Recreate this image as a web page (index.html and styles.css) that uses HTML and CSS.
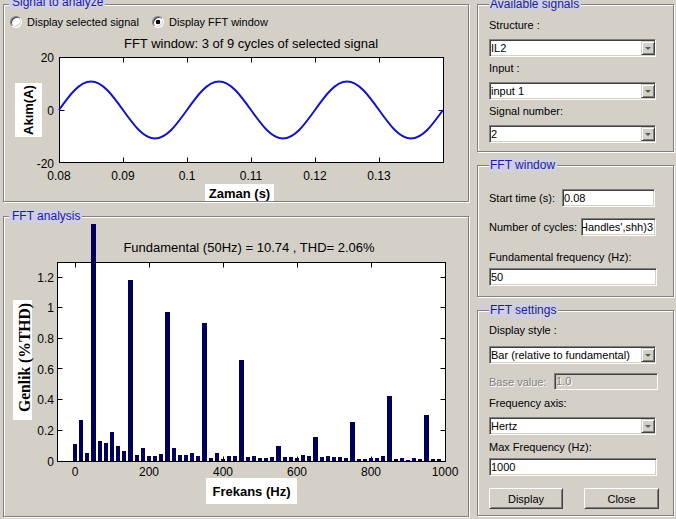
FILE: index.html
```html
<!DOCTYPE html>
<html>
<head>
<meta charset="utf-8">
<title>FFT Analysis</title>
<link rel="stylesheet" href="styles.css">
</head>
<body>
<div class="app">
  <div class="col left">
    <section class="panel p-signal">
      <div class="ptitle ptitle-top">Signal to analyze</div>
      <div class="radios">
        <label class="radio r-first"><span class="rb"></span>Display selected signal</label>
        <label class="radio"><span class="rb on"></span>Display FFT window</label>
      </div>
      <svg class="plot" width="464" height="172" viewBox="4 29 464 172">
        <text class="ttl" x="251" y="48" text-anchor="middle">FFT window: 3 of 9 cycles of selected signal</text>
        <rect x="59.5" y="57.5" width="384" height="105" fill="#fff" stroke="#000"/>
        <path class="ticks" d="M59.5 162.5v-5M123.5 162.5v-5M187.5 162.5v-5M251.5 162.5v-5M315.5 162.5v-5M379.5 162.5v-5M443.5 162.5v-5M59.5 57.5v5M123.5 57.5v5M187.5 57.5v5M251.5 57.5v5M315.5 57.5v5M379.5 57.5v5M443.5 57.5v5M59.5 57.5h5M59.5 110.5h5M59.5 162.5h5M443.5 57.5h-5M443.5 110.5h-5M443.5 162.5h-5"/>
        <path class="sine" d="M59 110c10.44 -14.6 20.42 -28.5 32 -28.5s21.56 13.9 32 28.5s20.42 28.5 32 28.5s21.56 -13.9 32 -28.5s20.42 -28.5 32 -28.5s21.56 13.9 32 28.5s20.42 28.5 32 28.5s21.56 -13.9 32 -28.5s20.42 -28.5 32 -28.5s21.56 13.9 32 28.5s20.42 28.5 32 28.5s21.56 -13.9 32 -28.5"/>
        <g class="tk" text-anchor="middle">
          <text x="59" y="180">0.08</text>
          <text x="123" y="180">0.09</text>
          <text x="187" y="180">0.1</text>
          <text x="251" y="180">0.11</text>
          <text x="315" y="180">0.12</text>
          <text x="379" y="180">0.13</text>
        </g>
        <g class="tk" text-anchor="end">
          <text x="54" y="61.5">20</text>
          <text x="54" y="114.5">0</text>
          <text x="54" y="167.5">-20</text>
        </g>
        <rect x="205" y="184" width="69" height="18" fill="#fff"/>
        <text class="axl" x="239.5" y="198" text-anchor="middle">Zaman (s)</text>
        <rect x="15" y="83" width="27" height="54" fill="#fff"/>
        <text class="axl" transform="translate(33 110) rotate(-90)" text-anchor="middle">Akım(A)</text>
      </svg>
    </section>
    <section class="panel p-analysis">
      <div class="ptitle">FFT analysis</div>
      <svg class="plot" width="464" height="293" viewBox="4 223 464 293">
        <text class="ttl" x="249" y="252" text-anchor="middle">Fundamental (50Hz) = 10.74 , THD= 2.06%</text>
        <rect x="57.5" y="262.5" width="388" height="199" fill="#fff" stroke="#000"/>
        <path class="ticks" d="M75.5 461.5v-5M149.5 461.5v-5M223.5 461.5v-5M297.5 461.5v-5M371.5 461.5v-5M445.5 461.5v-5M75.5 262.5v5M149.5 262.5v5M223.5 262.5v5M297.5 262.5v5M371.5 262.5v5M57.5 461.5h5M57.5 430.5h5M57.5 399.5h5M57.5 368.5h5M57.5 338.5h5M57.5 307.5h5M57.5 277.5h5M445.5 430.5h-5M445.5 399.5h-5M445.5 368.5h-5M445.5 338.5h-5M445.5 307.5h-5M445.5 277.5h-5"/>
        <g class="bars" transform="translate(75 461) scale(6.1667 -153.5)">
          <rect x="-0.325" width="0.65" height="0.11"/>
          <rect x="0.675" width="0.65" height="0.27"/>
          <rect x="1.675" width="0.65" height="0.05"/>
          <rect x="2.675" width="0.65" height="1.544"/>
          <rect x="3.675" width="0.65" height="0.13"/>
          <rect x="4.675" width="0.65" height="0.12"/>
          <rect x="5.675" width="0.65" height="0.19"/>
          <rect x="6.675" width="0.65" height="0.095"/>
          <rect x="7.675" width="0.65" height="0.065"/>
          <rect x="8.675" width="0.65" height="1.18"/>
          <rect x="9.675" width="0.65" height="0.04"/>
          <rect x="10.675" width="0.65" height="0.085"/>
          <rect x="11.675" width="0.65" height="0.035"/>
          <rect x="12.675" width="0.65" height="0.035"/>
          <rect x="13.675" width="0.65" height="0.045"/>
          <rect x="14.675" width="0.65" height="0.97"/>
          <rect x="15.675" width="0.65" height="0.085"/>
          <rect x="16.675" width="0.65" height="0.04"/>
          <rect x="17.675" width="0.65" height="0.04"/>
          <rect x="18.675" width="0.65" height="0.05"/>
          <rect x="19.675" width="0.65" height="0.03"/>
          <rect x="20.675" width="0.65" height="0.90"/>
          <rect x="21.675" width="0.65" height="0.02"/>
          <rect x="22.675" width="0.65" height="0.05"/>
          <rect x="23.675" width="0.65" height="0.015"/>
          <rect x="24.675" width="0.65" height="0.03"/>
          <rect x="25.675" width="0.65" height="0.035"/>
          <rect x="26.675" width="0.65" height="0.66"/>
          <rect x="27.675" width="0.65" height="0.025"/>
          <rect x="28.675" width="0.65" height="0.03"/>
          <rect x="29.675" width="0.65" height="0.02"/>
          <rect x="30.675" width="0.65" height="0.02"/>
          <rect x="31.675" width="0.65" height="0.025"/>
          <rect x="32.675" width="0.65" height="0.10"/>
          <rect x="33.675" width="0.65" height="0.025"/>
          <rect x="34.675" width="0.65" height="0.025"/>
          <rect x="35.675" width="0.65" height="0.02"/>
          <rect x="36.675" width="0.65" height="0.04"/>
          <rect x="37.675" width="0.65" height="0.03"/>
          <rect x="38.675" width="0.65" height="0.155"/>
          <rect x="39.675" width="0.65" height="0.025"/>
          <rect x="40.675" width="0.65" height="0.035"/>
          <rect x="41.675" width="0.65" height="0.025"/>
          <rect x="42.675" width="0.65" height="0.025"/>
          <rect x="43.675" width="0.65" height="0.02"/>
          <rect x="44.675" width="0.65" height="0.255"/>
          <rect x="45.675" width="0.65" height="0.015"/>
          <rect x="46.675" width="0.65" height="0.015"/>
          <rect x="47.675" width="0.65" height="0.02"/>
          <rect x="48.675" width="0.65" height="0.02"/>
          <rect x="49.675" width="0.65" height="0.03"/>
          <rect x="50.675" width="0.65" height="0.425"/>
          <rect x="51.675" width="0.65" height="0.015"/>
          <rect x="52.675" width="0.65" height="0.02"/>
          <rect x="53.675" width="0.65" height="0.008"/>
          <rect x="54.675" width="0.65" height="0.02"/>
          <rect x="55.675" width="0.65" height="0.015"/>
          <rect x="56.675" width="0.65" height="0.30"/>
          <rect x="57.675" width="0.65" height="0.015"/>
          <rect x="58.675" width="0.65" height="0.015"/>
        </g>
        <g class="tk" text-anchor="middle">
          <text x="75" y="476">0</text>
          <text x="149" y="476">200</text>
          <text x="223" y="476">400</text>
          <text x="297" y="476">600</text>
          <text x="371" y="476">800</text>
          <text x="445" y="476">1000</text>
        </g>
        <g class="tk" text-anchor="end">
          <text x="54" y="465.5">0</text>
          <text x="54" y="435">0.2</text>
          <text x="54" y="404">0.4</text>
          <text x="54" y="373.5">0.6</text>
          <text x="54" y="342.5">0.8</text>
          <text x="54" y="312">1</text>
          <text x="54" y="281.5">1.2</text>
        </g>
        <rect x="206" y="478" width="91" height="26" fill="#fff"/>
        <text class="axl" x="251.5" y="495.5" text-anchor="middle">Frekans (Hz)</text>
        <rect x="13" y="300" width="19" height="120" fill="#fff"/>
        <text class="axl-serif" transform="translate(30 357.5) rotate(-90)" text-anchor="middle" textLength="109" lengthAdjust="spacingAndGlyphs">Genlik (%THD)</text>
      </svg>
    </section>
  </div>

  <div class="col right">
    <section class="panel p-avail">
      <div class="ptitle">Available signals</div>
      <div class="fields f-avail">
        <div class="lbl">Structure :</div>
        <div class="popup sunken"><span class="ptext">IL2</span><span class="dd"><i></i></span></div>
        <div class="lbl">Input :</div>
        <div class="popup sunken"><span class="ptext">input 1</span><span class="dd"><i></i></span></div>
        <div class="lbl">Signal number:</div>
        <div class="popup sunken"><span class="ptext">2</span><span class="dd"><i></i></span></div>
      </div>
    </section>

    <section class="panel p-window">
      <div class="ptitle">FFT window</div>
      <div class="fields f-window">
        <div class="row r1"><span class="lbl w73">Start time (s):</span><div class="edit sunken w93">0.08</div></div>
        <div class="row r2"><span class="lbl w92">Number of cycles:</span><div class="edit sunken w75 clip"><span>Handles',shh)3</span></div></div>
        <div class="lbl l3">Fundamental frequency (Hz):</div>
        <div class="edit sunken w168 e3">50</div>
      </div>
    </section>

    <section class="panel p-settings">
      <div class="ptitle">FFT settings</div>
      <div class="fields f-settings">
        <div class="lbl">Display style :</div>
        <div class="popup sunken s-pop1"><span class="ptext">Bar (relative to fundamental)</span><span class="dd"><i></i></span></div>
        <div class="row rbase"><span class="lbl w64 dis">Base value:</span><div class="edit sunken w104 edis">1.0</div></div>
        <div class="lbl s-l2">Frequency axis:</div>
        <div class="popup sunken s-pop2"><span class="ptext">Hertz</span><span class="dd"><i></i></span></div>
        <div class="lbl s-l3">Max Frequency (Hz):</div>
        <div class="edit sunken w168 s-e3">1000</div>
        <div class="btns"><button class="btn b-display">Display</button><button class="btn b-close">Close</button></div>
      </div>
    </section>
  </div>
</div>
</body>
</html>
```

FILE: styles.css
```css
* { box-sizing: border-box; }
html, body { margin: 0; padding: 0; }
body {
  width: 676px;
  height: 519px;
  overflow: hidden;
  background: #d4d0c8;
  font-family: "Liberation Sans", Arial, sans-serif;
  font-size: 11px;
  color: #000;
}
.app {
  display: grid;
  grid-template-columns: 466px 197px;
  column-gap: 8px;
  padding: 4px 0 0 3px;
}
.col { display: flex; flex-direction: column; }
.left { gap: 14px; }
.right { gap: 13px; }

.panel {
  border: 1px solid #808080;
  box-shadow: inset 1px 1px 0 #fff, 1px 1px 0 #fff;
  display: flex;
  flex-direction: column;
}
.p-signal { height: 198px; }
.p-analysis { height: 301px; }
.p-avail { height: 148px; }
.p-window { height: 132px; }
.p-settings { height: 206px; }

.ptitle {
  align-self: flex-start;
  height: 14px;
  line-height: 14px;
  margin: -8px 0 0 5px;
  padding: 0 2px 0 3px;
  background: #cfcfe2;
  color: #1c1ca4;
  font-size: 12px;
  white-space: nowrap;
}
.ptitle-top { margin-top: -10px; }
.right .ptitle { margin-left: 11px; padding-left: 1px; }

/* radios */
.radios {
  display: flex;
  align-items: center;
  height: 14px;
  margin: 6px 0 0 6px;
}
.radio { display: flex; align-items: center; white-space: nowrap; }
.r-first { width: 142px; }
.rb {
  width: 12px;
  height: 12px;
  border-radius: 50%;
  border: 1px solid;
  border-color: #808080 #fff #fff #808080;
  box-shadow: inset 1px 1px 0 #404040, inset -1px -1px 0 #d4d0c8;
  background: #fff;
  margin-right: 5px;
  flex: 0 0 auto;
}
.rb.on { background: radial-gradient(circle at 50% 50%, #000 0 2px, #fff 2.6px); }

/* plots */
.plot { display: block; }
.plot .ticks { stroke: #000; fill: none; }
.plot .sine { fill: none; stroke: #1414c4; stroke-width: 2; }
.plot .bars rect { fill: #00005a; }
.plot .bars { shape-rendering: crispEdges; }
.tk { font: 12px "Liberation Sans", Arial, sans-serif; fill: #000; }
.ttl { font: 13px "Liberation Sans", Arial, sans-serif; fill: #000; }
.axl { font: bold 13px "Liberation Sans", Arial, sans-serif; fill: #000; }
.axl-serif { font: bold 17px "Liberation Serif", "Times New Roman", serif; fill: #000; }

/* right column fields */
.fields {
  display: flex;
  flex-direction: column;
  align-items: flex-start;
  padding-left: 11px;
}
.lbl { height: 14px; line-height: 14px; white-space: nowrap; }
.row { display: flex; align-items: center; }

.sunken {
  border: 1px solid;
  border-color: #808080 #fff #fff #808080;
  box-shadow: inset 1px 1px 0 #404040, inset -1px -1px 0 #d4d0c8;
  background: #fff;
}
.popup {
  width: 167px;
  height: 18px;
  display: flex;
  align-items: center;
  justify-content: space-between;
}
.ptext { padding-left: 1px; line-height: 14px; white-space: nowrap; }
.dd {
  width: 14px;
  height: 14px;
  background: #d4d0c8;
  border: 1px solid;
  border-color: #d4d0c8 #404040 #404040 #d4d0c8;
  box-shadow: inset 1px 1px 0 #fff, inset -1px -1px 0 #808080;
  display: flex;
  align-items: center;
  justify-content: center;
}
.dd i {
  display: block;
  width: 0;
  height: 0;
  border-left: 3px solid transparent;
  border-right: 3px solid transparent;
  border-top: 3px solid #5a5a5a;
  margin-top: 1px;
}
.edit {
  height: 18px;
  line-height: 16px;
  padding-left: 1px;
  white-space: nowrap;
  overflow: hidden;
}
.w73 { width: 73px; }
.w92 { width: 92px; }
.w64 { width: 65px; }
.w93 { width: 93px; }
.w75 { width: 75px; }
.w104 { width: 104px; }
.w168 { width: 168px; }
.clip { display: flex; justify-content: flex-end; padding: 0 2px 0 0; }
.clip span { flex: 0 0 auto; }

.f-avail { padding-top: 7px; }
.f-avail .lbl { margin-bottom: 7px; }
.f-avail .popup { margin-bottom: 4px; }

.f-window { padding-top: 17px; }
.r1, .r2 { height: 18px; }
.r2 { margin-top: 11px; }
.l3 { margin-top: 14px; }
.e3 { margin-top: 4px; }

.f-settings { padding-top: 6px; }
.s-pop1 { margin-top: 9px; }
.rbase { margin-top: 9px; height: 17px; }
.rbase .edit { height: 17px; line-height: 15px; }
.dis { color: #808080; text-shadow: 1px 1px 0 #fff; }
.edis { background: #d4d0c8; color: #808080; text-shadow: 1px 1px 0 #fff; }
.s-l2 { margin-top: 6px; }
.s-pop2 { margin-top: 7px; }
.s-l3 { margin-top: 5px; }
.s-e3 { margin-top: 4px; }
.btns { display: flex; margin-top: 12px; }
.btn {
  height: 21px;
  font: 11px "Liberation Sans", Arial, sans-serif;
  color: #000;
  background: #d4d0c8;
  border: 1px solid;
  border-color: #fff #404040 #404040 #fff;
  box-shadow: inset 1px 1px 0 #d4d0c8, inset -1px -1px 0 #808080;
  padding: 0;
  margin: 0;
}
.b-display { width: 74px; }
.b-close { width: 75px; margin-left: 21px; }
```
